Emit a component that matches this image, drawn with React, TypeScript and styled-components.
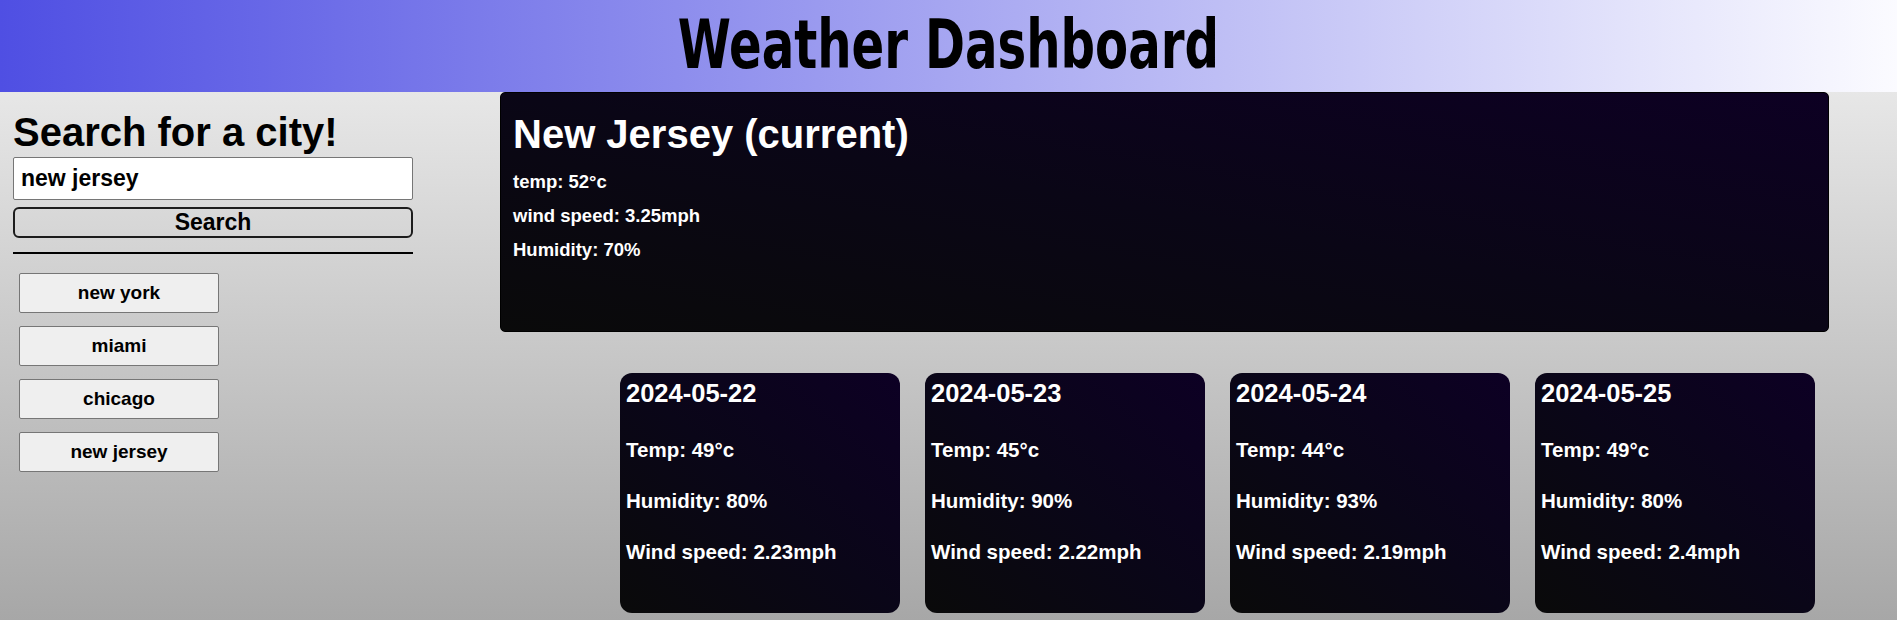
import React from "react";
import styled, { createGlobalStyle } from "styled-components";

const GlobalStyle = createGlobalStyle`
  html, body {
    margin: 0;
    padding: 0;
  }
  body {
    min-height: 100vh;
    background: linear-gradient(to bottom, #f2f2f2 0%, #a7a7a7 100%);
    font-family: "Liberation Sans", Arial, sans-serif;
    font-weight: bold;
    color: #000;
  }
`;

const Header = styled.header`
  height: 92px;
  display: flex;
  align-items: flex-start;
  justify-content: center;
  background: linear-gradient(to right, #4f4fe3 0%, #a6a6f1 50%, #fbfbff 100%);
`;

const Title = styled.h1`
  margin: 0;
  padding-top: 6px;
  font-family: "DejaVu Sans Condensed", "DejaVu Sans", sans-serif;
  font-size: 67px;
  line-height: 79px;
  font-weight: bold;
  color: #000;
  white-space: nowrap;
  transform: scaleX(0.8);
  transform-origin: center top;
`;

const Layout = styled.div`
  display: flex;
  align-items: flex-start;
`;

const Sidebar = styled.aside`
  width: 400px;
  margin-left: 13px;
  display: flex;
  flex-direction: column;
`;

const SideHeading = styled.h2`
  margin: 17px 0 0 0;
  font-size: 40px;
  line-height: 46px;
  font-weight: bold;
`;

const SearchInput = styled.input`
  box-sizing: border-box;
  width: 400px;
  height: 43px;
  margin-top: 2px;
  padding: 0 7px;
  border: 1px solid #767676;
  border-radius: 2px;
  background: #fff;
  font-family: "Liberation Sans", Arial, sans-serif;
  font-weight: bold;
  font-size: 23px;
  color: #000;
  outline: none;
`;

const SearchButton = styled.button`
  box-sizing: border-box;
  width: 400px;
  height: 31px;
  margin-top: 7px;
  padding: 0;
  border: 2px solid #1c1c1c;
  border-radius: 6px;
  background: transparent;
  font-family: "Liberation Sans", Arial, sans-serif;
  font-weight: bold;
  font-size: 23px;
  line-height: 27px;
  color: #000;
`;

const Divider = styled.hr`
  width: 400px;
  margin: 14px 0 0 0;
  border: none;
  height: 2px;
  background: #000;
`;

const CityList = styled.div`
  display: flex;
  flex-direction: column;
  gap: 13px;
  margin-top: 19px;
  padding-left: 6px;
`;

const CityButton = styled.button`
  box-sizing: border-box;
  width: 200px;
  height: 40px;
  padding: 0;
  border: 1px solid #767676;
  border-radius: 2px;
  background: #efefef;
  font-family: "Liberation Sans", Arial, sans-serif;
  font-weight: bold;
  font-size: 19px;
  color: #000;
`;

const Main = styled.main`
  margin-left: 87px;
  width: 1329px;
  display: flex;
  flex-direction: column;
`;

const CurrentCard = styled.section`
  box-sizing: border-box;
  height: 240px;
  padding: 18px 12px 0 12px;
  border: 1px solid #000;
  border-radius: 5px;
  background: linear-gradient(to top right, #0a0a0a 0%, #0a0616 50%, #0d0023 100%);
  color: #fff;
`;

const CurrentTitle = styled.h2`
  margin: 0 0 14px 0;
  font-size: 40px;
  line-height: 46px;
  font-weight: bold;
`;

const CurrentLine = styled.p`
  margin: 0 0 12px 0;
  font-size: 18.5px;
  line-height: 22px;
`;

const ForecastRow = styled.div`
  display: flex;
  gap: 25px;
  margin-top: 41px;
  padding-left: 120px;
`;

const ForecastCard = styled.article`
  box-sizing: border-box;
  width: 280px;
  height: 240px;
  padding: 6px 6px 0 6px;
  border-radius: 12px;
  background: linear-gradient(to top right, #0a0a0a 0%, #0a0618 50%, #0d0024 100%);
  color: #fff;
`;

const ForecastDate = styled.h3`
  margin: 0 0 30px 0;
  font-size: 25.5px;
  line-height: 29px;
  font-weight: bold;
`;

const ForecastLine = styled.p`
  margin: 0 0 27px 0;
  font-size: 20.5px;
  line-height: 24px;
`;

const cities = ["new york", "miami", "chicago", "new jersey"];

const forecast = [
  { date: "2024-05-22", temp: 49, humidity: 80, wind: "2.23" },
  { date: "2024-05-23", temp: 45, humidity: 90, wind: "2.22" },
  { date: "2024-05-24", temp: 44, humidity: 93, wind: "2.19" },
  { date: "2024-05-25", temp: 49, humidity: 80, wind: "2.4" },
];

export default function App() {
  return (
    <>
      <GlobalStyle />
      <Header>
        <Title>Weather Dashboard</Title>
      </Header>
      <Layout>
        <Sidebar>
          <SideHeading>Search for a city!</SideHeading>
          <SearchInput defaultValue="new jersey" />
          <SearchButton>Search</SearchButton>
          <Divider />
          <CityList>
            {cities.map((c) => (
              <CityButton key={c}>{c}</CityButton>
            ))}
          </CityList>
        </Sidebar>
        <Main>
          <CurrentCard>
            <CurrentTitle>New Jersey (current)</CurrentTitle>
            <CurrentLine>temp: 52°c</CurrentLine>
            <CurrentLine>wind speed: 3.25mph</CurrentLine>
            <CurrentLine>Humidity: 70%</CurrentLine>
          </CurrentCard>
          <ForecastRow>
            {forecast.map((f) => (
              <ForecastCard key={f.date}>
                <ForecastDate>{f.date}</ForecastDate>
                <ForecastLine>Temp: {f.temp}°c</ForecastLine>
                <ForecastLine>Humidity: {f.humidity}%</ForecastLine>
                <ForecastLine>Wind speed: {f.wind}mph</ForecastLine>
              </ForecastCard>
            ))}
          </ForecastRow>
        </Main>
      </Layout>
    </>
  );
}
